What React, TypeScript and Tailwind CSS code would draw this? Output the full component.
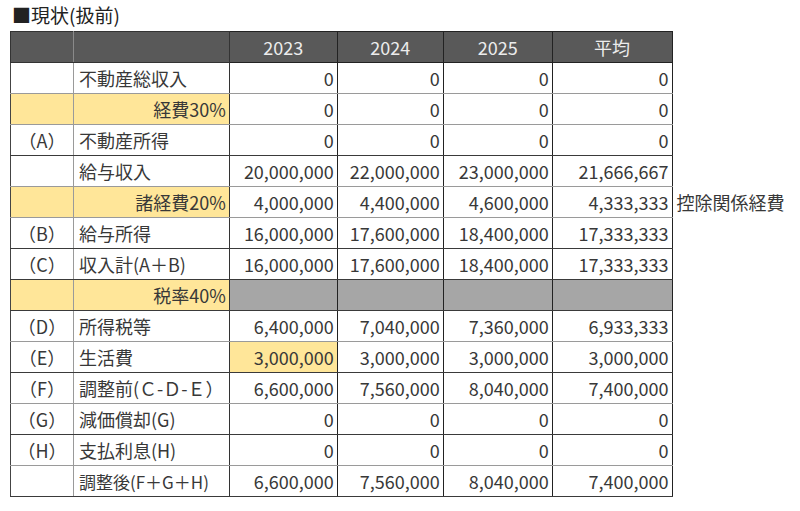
type Row = {
  tag: string
  label: string
  values: string[]
  tagYellow?: boolean
  labelRight?: boolean
  labelSmall?: boolean
  grayValues?: boolean
  yellowFirst?: boolean
  note?: string
  dark?: boolean
}

const zeros = ["0", "0", "0", "0"]

const rows: Row[] = [
  { tag: "", label: "不動産総収入", values: zeros },
  { tag: "", label: "経費30%", values: zeros, tagYellow: true, labelRight: true },
  { tag: "（A）", label: "不動産所得", values: zeros, dark: true },
  { tag: "", label: "給与収入", values: ["20,000,000", "22,000,000", "23,000,000", "21,666,667"] },
  {
    tag: "",
    label: "諸経費20%",
    values: ["4,000,000", "4,400,000", "4,600,000", "4,333,333"],
    tagYellow: true,
    labelRight: true,
    note: "控除関係経費",
  },
  { tag: "（B）", label: "給与所得", values: ["16,000,000", "17,600,000", "18,400,000", "17,333,333"], dark: true },
  { tag: "（C）", label: "収入計(A＋B)", values: ["16,000,000", "17,600,000", "18,400,000", "17,333,333"], dark: true },
  { tag: "", label: "税率40%", values: ["", "", "", ""], tagYellow: true, labelRight: true, grayValues: true, dark: true },
  { tag: "（D）", label: "所得税等", values: ["6,400,000", "7,040,000", "7,360,000", "6,933,333"] },
  {
    tag: "（E）",
    label: "生活費",
    values: ["3,000,000", "3,000,000", "3,000,000", "3,000,000"],
    yellowFirst: true,
    dark: true,
  },
  { tag: "（F）", label: "調整前(Ｃ-Ｄ-Ｅ）", values: ["6,600,000", "7,560,000", "8,040,000", "7,400,000"] },
  { tag: "（G）", label: "減価償却(G)", values: zeros, dark: true },
  { tag: "（H）", label: "支払利息(H)", values: zeros },
  {
    tag: "",
    label: "調整後(F＋G＋H)",
    values: ["6,600,000", "7,560,000", "8,040,000", "7,400,000"],
    labelSmall: true,
    dark: true,
  },
]

export default function App() {
  return (
    <div
      className="w-[800px] h-[511px] bg-white text-[#383838] overflow-hidden"
      style={{ fontFamily: '"Noto Sans CJK JP", "Noto Sans", sans-serif' }}
    >
      <div className="pl-[12px] pt-[3px] h-[31px] text-[19px] leading-[24px] text-[#222]">■現状(扱前)</div>

      <table className="ml-[10px] border-collapse table-fixed text-[18px] leading-none">
        <colgroup>
          <col className="w-[63px]" />
          <col className="w-[156px]" />
          <col className="w-[108px]" />
          <col className="w-[106px]" />
          <col className="w-[109px]" />
          <col className="w-[120px]" />
          <col className="w-[128px]" />
        </colgroup>
        <thead>
          <tr className="h-[31px] bg-[#595959] text-[#ececec]">
            <th className="border border-[#333] border-r-[#8a8a8a]" />
            <th className="border border-[#333]" />
            <th className="border border-[#222] font-normal text-center">2023</th>
            <th className="border border-[#222] font-normal text-center">2024</th>
            <th className="border border-[#222] font-normal text-center">2025</th>
            <th className="border border-[#222] font-normal text-center">平均</th>
            <th className="bg-white" />
          </tr>
        </thead>
        <tbody>
          {rows.map((r, i) => {
            const bottom = r.dark ? "border-b-[#3a3a3a]" : "border-b-[#9a9a9a]"
            return (
              <tr key={i} className="h-[31px]">
                <td
                  className={`border-l border-l-[#444] border-r border-r-[#9a9a9a] border-b ${bottom} text-center ${
                    r.tagYellow ? "bg-[#ffe699]" : ""
                  }`}
                >
                  {r.tag}
                </td>
                <td
                  className={`border-r border-r-[#333] border-b ${bottom} whitespace-nowrap ${
                    r.labelRight ? "bg-[#ffe699] text-right pr-[3px]" : "pl-[5px]"
                  } ${r.labelSmall ? "text-[17px]" : ""}`}
                >
                  {r.label}
                </td>
                {r.values.map((v, j) => (
                  <td
                    key={j}
                    className={`border-r border-r-[#222] border-b ${bottom} text-right pr-[3px] ${
                      r.grayValues ? "bg-[#a6a6a6]" : r.yellowFirst && j === 0 ? "bg-[#ffe699]" : ""
                    }`}
                  >
                    {v}
                  </td>
                ))}
                <td className="pl-[4px] whitespace-nowrap">{r.note ?? ""}</td>
              </tr>
            )
          })}
        </tbody>
      </table>
    </div>
  )
}
